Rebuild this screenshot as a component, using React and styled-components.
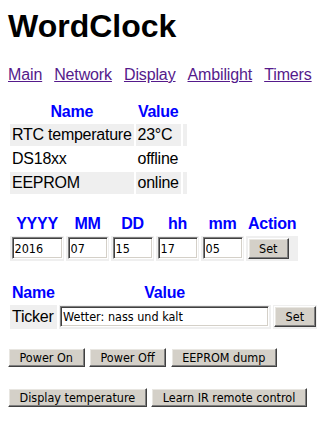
import React from 'react';
import styled, { createGlobalStyle } from 'styled-components';

const GlobalStyle = createGlobalStyle`
	body {
		margin: 8px;
		background: #fff;
		color: #000;
		font-family: "Liberation Sans", Arial, sans-serif;
		font-size: 16px;
		letter-spacing: -0.25px;
	}
`;

const Title = styled.h1`
	margin: 0 0 21px;
	font-size: 32px;
	line-height: 37px;
	font-weight: bold;
	letter-spacing: 0;
`;

const Nav = styled.nav`
	display: flex;
	gap: 12px;
	margin-bottom: 14px;
	line-height: 18px;
	letter-spacing: -0.13px;
`;

const NavLink = styled.a`
	color: #551a8b;
	text-decoration: underline;
`;

const Table = styled.table`
	border-spacing: 2px;
	margin-top: ${(props) => props.gap || 0}px;
`;

const Head = styled.th`
	padding: 3px 2px 1px;
	color: #0000ff;
	font-weight: bold;
	text-align: center;
	line-height: 18px;
`;

const Cell = styled.td`
	padding: 2px;
	line-height: 18px;
	background: ${(props) => (props.shade ? '#efefef' : 'transparent')};
	vertical-align: middle;
`;

const ControlCell = styled(Cell)`
	padding: 1px 1.5px 2px;
	line-height: 0;
`;

const controlFont = `
	font-family: "DejaVu Sans Condensed", "DejaVu Sans", sans-serif;
	font-stretch: condensed;
	font-size: 12.5px;
	color: #000;
	letter-spacing: 0;
`;

const Field = styled.input`
	${controlFont}
	box-sizing: border-box;
	width: ${(props) => props.w}px;
	height: ${(props) => props.h || 22}px;
	margin: 0;
	padding: 1px 2px;
	background: #fff;
	border: 1px solid;
	border-color: #808080 #fff #fff #808080;
	box-shadow: inset 1px 1px #404040, inset -1px -1px #d4d0c8;
	outline: none;
`;

const Button = styled.button`
	${controlFont}
	box-sizing: border-box;
	height: ${(props) => props.h || 21}px;
	margin: 0;
	padding: 0 10.5px;
	background: #d4d0c8;
	border: 1px solid;
	border-color: #fff #404040 #404040 #fff;
	box-shadow: inset -1px -1px #808080, inset 1px 1px #e8e6e1;
	white-space: nowrap;
	cursor: pointer;
`;

const ButtonRow = styled.div`
	display: flex;
	gap: 4.5px;
	margin-top: ${(props) => props.gap}px;
`;

const status = [
	['RTC temperature', '23°C', true],
	['DS18xx', 'offline', false],
	['EEPROM', 'online', true],
];

const dateFields = [
	['YYYY', '2016', 51],
	['MM', '07', 40],
	['DD', '15', 40],
	['hh', '17', 40],
	['mm', '05', 40],
];

const App = () => (
	<>
		<GlobalStyle />
		<Title>WordClock</Title>
		<Nav>
			{['Main', 'Network', 'Display', 'Ambilight', 'Timers'].map((n) => (
				<NavLink key={n} href='#'>
					{n}
				</NavLink>
			))}
		</Nav>

		<Table>
			<thead>
				<tr>
					<Head>Name</Head>
					<Head>Value</Head>
					<Head />
				</tr>
			</thead>
			<tbody>
				{status.map(([name, value, shade]) => (
					<tr key={name}>
						<Cell shade={shade}>{name}</Cell>
						<Cell shade={shade}>{value}</Cell>
						<Cell shade={shade} style={{ padding: 1 }} />
					</tr>
				))}
			</tbody>
		</Table>

		<Table gap={14}>
			<thead>
				<tr>
					{dateFields.map(([label]) => (
						<Head key={label}>{label}</Head>
					))}
					<Head>Action</Head>
				</tr>
			</thead>
			<tbody>
				<tr>
					{dateFields.map(([label, value, w]) => (
						<ControlCell key={label} shade>
							<Field w={w} defaultValue={value} />
						</ControlCell>
					))}
					<ControlCell shade>
						<Button>Set</Button>
					</ControlCell>
				</tr>
			</tbody>
		</Table>

		<Table gap={16}>
			<thead>
				<tr>
					<Head>Name</Head>
					<Head>Value</Head>
					<Head />
				</tr>
			</thead>
			<tbody>
				<tr>
					<Cell shade>Ticker</Cell>
					<ControlCell shade>
						<Field w={209} h={21} defaultValue='Wetter: nass und kalt' />
					</ControlCell>
					<ControlCell shade>
						<Button>Set</Button>
					</ControlCell>
				</tr>
			</tbody>
		</Table>

		<ButtonRow gap={17}>
			<Button h={19}>Power On</Button>
			<Button h={19}>Power Off</Button>
			<Button h={19}>EEPROM dump</Button>
		</ButtonRow>
		<ButtonRow gap={21}>
			<Button h={19}>Display temperature</Button>
			<Button h={19}>Learn IR remote control</Button>
		</ButtonRow>
	</>
);

export default App;
